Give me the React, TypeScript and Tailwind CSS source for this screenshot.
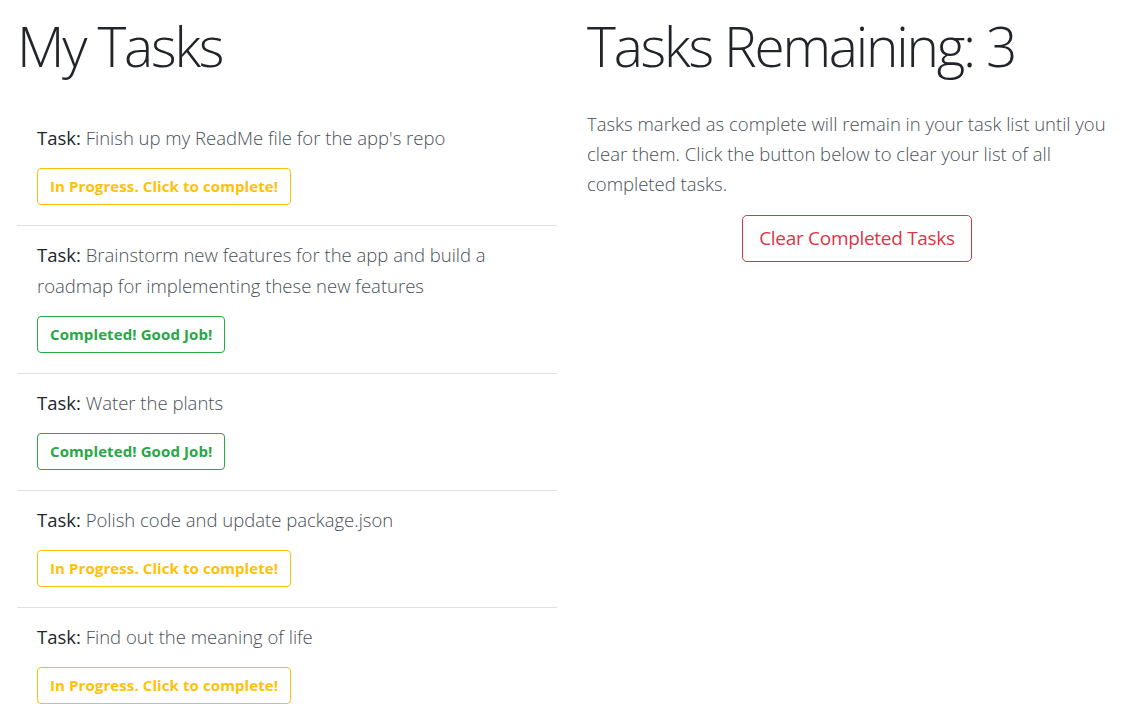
import { useState } from "react";

interface Task {
  id: number;
  text: string;
  done: boolean;
}

const initialTasks: Task[] = [
  { id: 1, text: "Finish up my ReadMe file for the app's repo", done: false },
  {
    id: 2,
    text: "Brainstorm new features for the app and build a roadmap for implementing these new features",
    done: true,
  },
  { id: 3, text: "Water the plants", done: true },
  { id: 4, text: "Polish code and update package.json", done: false },
  { id: 5, text: "Find out the meaning of life", done: false },
];

const App = () => {
  const [tasks, setTasks] = useState<Task[]>(initialTasks);

  const toggleTask = (id: number) => {
    setTasks((prev) =>
      prev.map((t) => (t.id === id ? { ...t, done: !t.done } : t))
    );
  };

  const clearCompleted = () => {
    setTasks((prev) => prev.filter((t) => !t.done));
  };

  const remaining = tasks.filter((t) => !t.done).length;

  return (
    <div
      className="w-full min-h-screen bg-white text-[#212529]"
      style={{ fontFamily: '"Open Sans", "Noto Sans", sans-serif' }}
    >
      <div className="grid grid-cols-2 px-[15px]">
        <div className="pr-[15px] pl-[2px]">
          <h1 className="text-[55px] leading-[67px] font-light tracking-[-2.2px] mt-[12px] mb-[30px]">
            My Tasks
          </h1>
          <ul className="flex flex-col">
            {tasks.map((task, i) => (
              <li
                key={task.id}
                className={`pl-[20px] pr-[20px] pt-[13px] pb-[20px] ${
                  i > 0 ? "border-t border-[#dee2e6]" : ""
                }`}
              >
                <p className="text-[18.5px] leading-[31px] font-light text-[#495057] mb-[15px]">
                  <span className="font-normal text-[#212529]">Task:</span>{" "}
                  {task.text}
                </p>
                {task.done ? (
                  <button
                    onClick={() => toggleTask(task.id)}
                    className="border border-[#28a745] text-[#28a745] rounded-[4px] px-[12px] h-[37px] text-[15px] font-bold tracking-[0.1px]"
                  >
                    Completed! Good Job!
                  </button>
                ) : (
                  <button
                    onClick={() => toggleTask(task.id)}
                    className="border border-[#ffc107] text-[#ffc107] rounded-[4px] px-[12px] h-[37px] text-[15px] font-bold tracking-[0.1px]"
                  >
                    In Progress. Click to complete!
                  </button>
                )}
              </li>
            ))}
          </ul>
        </div>
        <div className="pl-[15px]">
          <h1 className="text-[55px] leading-[67px] font-light tracking-[-2.2px] mt-[12px] mb-[30px]">
            Tasks Remaining: {remaining}
          </h1>
          <p className="text-[18.5px] leading-[30px] font-light text-[#495057] mb-[16px] pr-[10px]">
            Tasks marked as complete will remain in your task list until you
            clear them. Click the button below to clear your list of all
            completed tasks.
          </p>
          <div className="flex justify-center">
            <button
              onClick={clearCompleted}
              className="border border-[#dc3545] text-[#dc3545] rounded-[5px] h-[47px] px-[16px] text-[19px] font-normal tracking-[-0.3px] ml-[-2px]"
            >
              Clear Completed Tasks
            </button>
          </div>
        </div>
      </div>
    </div>
  );
};

export default App;
